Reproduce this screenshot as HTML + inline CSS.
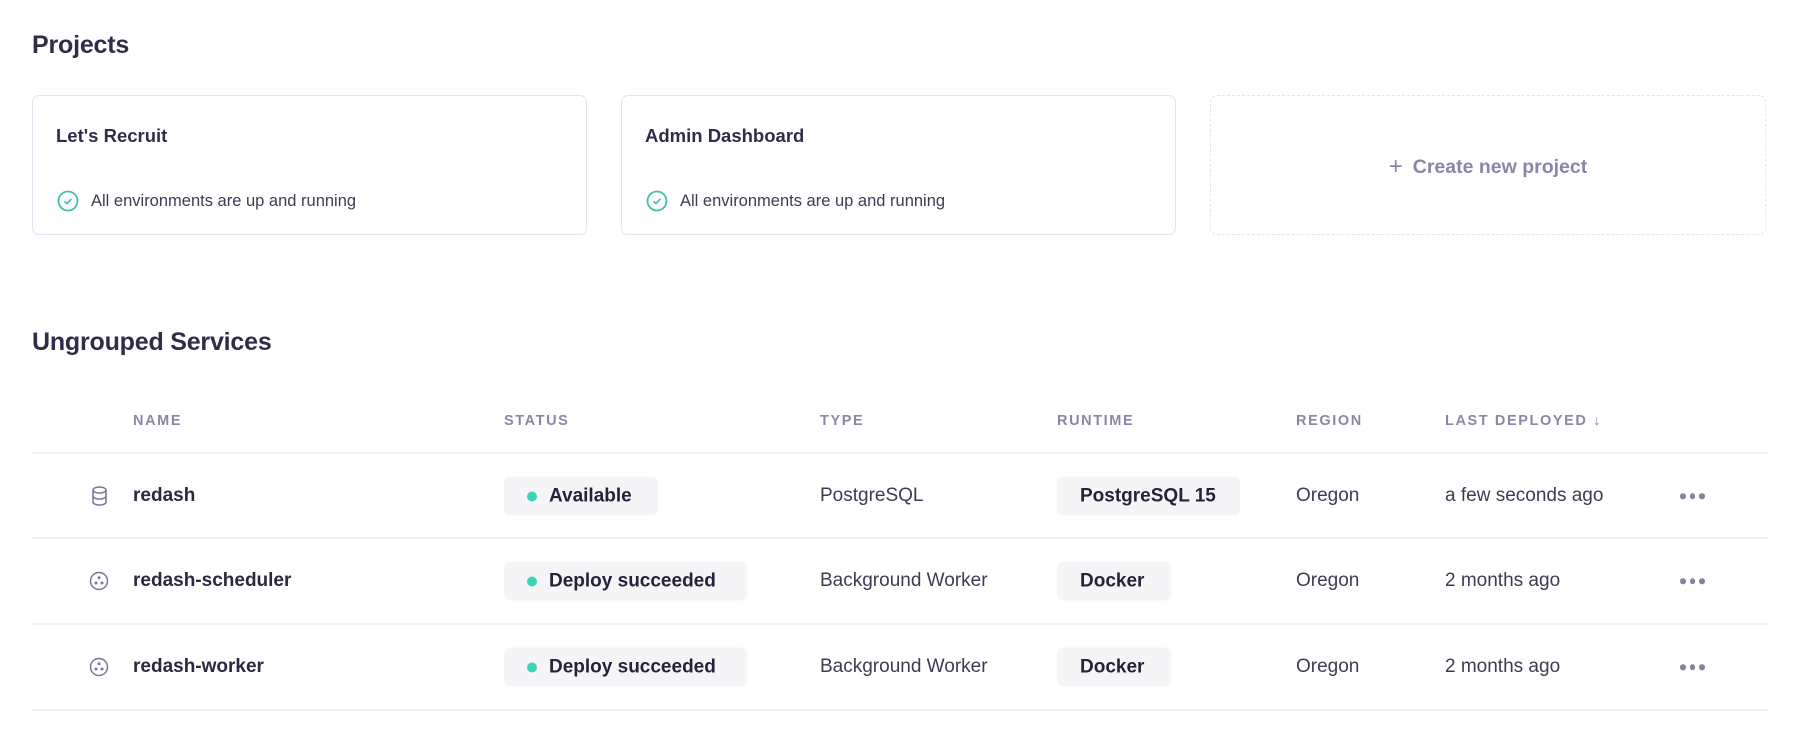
<!DOCTYPE html>
<html><head><meta charset="utf-8"><style>
*{margin:0;padding:0;box-sizing:border-box}
body{width:1800px;height:747px;background:#fff;font-family:"Liberation Sans",sans-serif;color:#2a2940;position:relative;overflow:hidden}
.a{position:absolute;white-space:nowrap}
h1{position:absolute;font-size:25px;font-weight:bold;color:#2f2e48;letter-spacing:-0.2px}
.card{position:absolute;top:95px;height:140px;border:1.5px solid #e3e4f2;border-radius:7px}
.ct{position:absolute;left:23px;top:29px;font-size:18.5px;font-weight:bold;color:#2f2e48}
.cs{position:absolute;left:24px;top:94px;font-size:16.5px;color:#3d3c52;display:flex;align-items:center;gap:12px}
.th{position:absolute;top:413px;font-size:14.5px;letter-spacing:1.6px;color:#8a87a6;font-weight:bold}
.line{position:absolute;left:32px;width:1736px;height:1.5px;background:#f1f1f5}
.cell{position:absolute;font-size:19px;color:#3d3c52;transform:translateY(-50%)}
.nm{font-weight:bold;color:#2a2940}
.pill{position:absolute;height:39px;background:#f5f5f8;border-radius:6px;transform:translateY(-50%);font-size:19px;font-weight:bold;color:#24233a;display:flex;align-items:center}
.dot{width:10px;height:10px;border-radius:50%;background:#3dd3b8;margin:0 12px 0 23px}
.more{position:absolute;left:1680px;transform:translateY(-50%);display:flex;gap:4px}
.more i{width:5.5px;height:5.5px;border-radius:50%;background:#85839f;display:block}
</style></head><body>
<h1 style="left:32px;top:31px">Projects</h1>
<div class="card" style="left:32px;width:555px"><div class="ct">Let's Recruit</div>
<div class="cs"><svg width="22" height="22" viewBox="0 0 22 22"><circle cx="11" cy="11" r="9.5" fill="none" stroke="#3fc2a3" stroke-width="1.8"/><path d="M7.5 11.2l2.4 2.4 4.6-4.8" fill="none" stroke="#3fc2a3" stroke-width="1.6"/></svg>All environments are up and running</div></div>
<div class="card" style="left:621px;width:555px"><div class="ct">Admin Dashboard</div>
<div class="cs"><svg width="22" height="22" viewBox="0 0 22 22"><circle cx="11" cy="11" r="9.5" fill="none" stroke="#3fc2a3" stroke-width="1.8"/><path d="M7.5 11.2l2.4 2.4 4.6-4.8" fill="none" stroke="#3fc2a3" stroke-width="1.6"/></svg>All environments are up and running</div></div>
<div class="card" style="left:1210px;width:556px;border:1.5px dashed #e3e4ee;display:flex;align-items:center;justify-content:center;font-size:19.5px;color:#8a86a6;font-weight:bold;padding-top:4px"><span style="font-size:24px;font-weight:300;margin-right:10px">+</span>Create new project</div>

<h1 style="left:32px;top:328px">Ungrouped Services</h1>
<div class="th" style="left:133px">NAME</div>
<div class="th" style="left:504px">STATUS</div>
<div class="th" style="left:820px">TYPE</div>
<div class="th" style="left:1057px">RUNTIME</div>
<div class="th" style="left:1296px">REGION</div>
<div class="th" style="left:1445px">LAST DEPLOYED ↓</div>
<div class="line" style="top:452px"></div>
<div class="line" style="top:537px"></div>
<div class="line" style="top:623px"></div>
<div class="line" style="top:709px"></div>

<svg class="a" style="left:91px;top:486px" width="17" height="20" viewBox="0 0 17 20"><ellipse cx="8.5" cy="4" rx="6.5" ry="3" fill="none" stroke="#77759a" stroke-width="1.5"/><path d="M2 4v12c0 1.7 2.9 3 6.5 3s6.5-1.3 6.5-3V4M2 10c0 1.7 2.9 3 6.5 3s6.5-1.3 6.5-3" fill="none" stroke="#77759a" stroke-width="1.5"/></svg>
<div class="cell nm" style="left:133px;top:496px">redash</div>
<div class="pill" style="left:504px;top:496px;width:154px"><span class="dot"></span>Available</div>
<div class="cell" style="left:820px;top:496px">PostgreSQL</div>
<div class="pill" style="left:1057px;top:496px;width:183px;padding-left:23px">PostgreSQL 15</div>
<div class="cell" style="left:1296px;top:496px">Oregon</div>
<div class="cell" style="left:1445px;top:496px">a few seconds ago</div>
<div class="more" style="top:496px"><i></i><i></i><i></i></div>

<svg class="a" style="left:89px;top:571px" width="20" height="20" viewBox="0 0 20 20"><circle cx="10" cy="10" r="8.5" fill="none" stroke="#77759a" stroke-width="1.5"/><circle cx="10" cy="6.8" r="1.5" fill="#77759a"/><circle cx="7" cy="12" r="1.5" fill="#77759a"/><circle cx="13" cy="12" r="1.5" fill="#77759a"/></svg>
<div class="cell nm" style="left:133px;top:581px">redash-scheduler</div>
<div class="pill" style="left:504px;top:581px;width:243px"><span class="dot"></span>Deploy succeeded</div>
<div class="cell" style="left:820px;top:581px">Background Worker</div>
<div class="pill" style="left:1057px;top:581px;width:114px;padding-left:23px">Docker</div>
<div class="cell" style="left:1296px;top:581px">Oregon</div>
<div class="cell" style="left:1445px;top:581px">2 months ago</div>
<div class="more" style="top:581px"><i></i><i></i><i></i></div>

<svg class="a" style="left:89px;top:657px" width="20" height="20" viewBox="0 0 20 20"><circle cx="10" cy="10" r="8.5" fill="none" stroke="#77759a" stroke-width="1.5"/><circle cx="10" cy="6.8" r="1.5" fill="#77759a"/><circle cx="7" cy="12" r="1.5" fill="#77759a"/><circle cx="13" cy="12" r="1.5" fill="#77759a"/></svg>
<div class="cell nm" style="left:133px;top:667px">redash-worker</div>
<div class="pill" style="left:504px;top:667px;width:243px"><span class="dot"></span>Deploy succeeded</div>
<div class="cell" style="left:820px;top:667px">Background Worker</div>
<div class="pill" style="left:1057px;top:667px;width:114px;padding-left:23px">Docker</div>
<div class="cell" style="left:1296px;top:667px">Oregon</div>
<div class="cell" style="left:1445px;top:667px">2 months ago</div>
<div class="more" style="top:667px"><i></i><i></i><i></i></div>
</body></html>
